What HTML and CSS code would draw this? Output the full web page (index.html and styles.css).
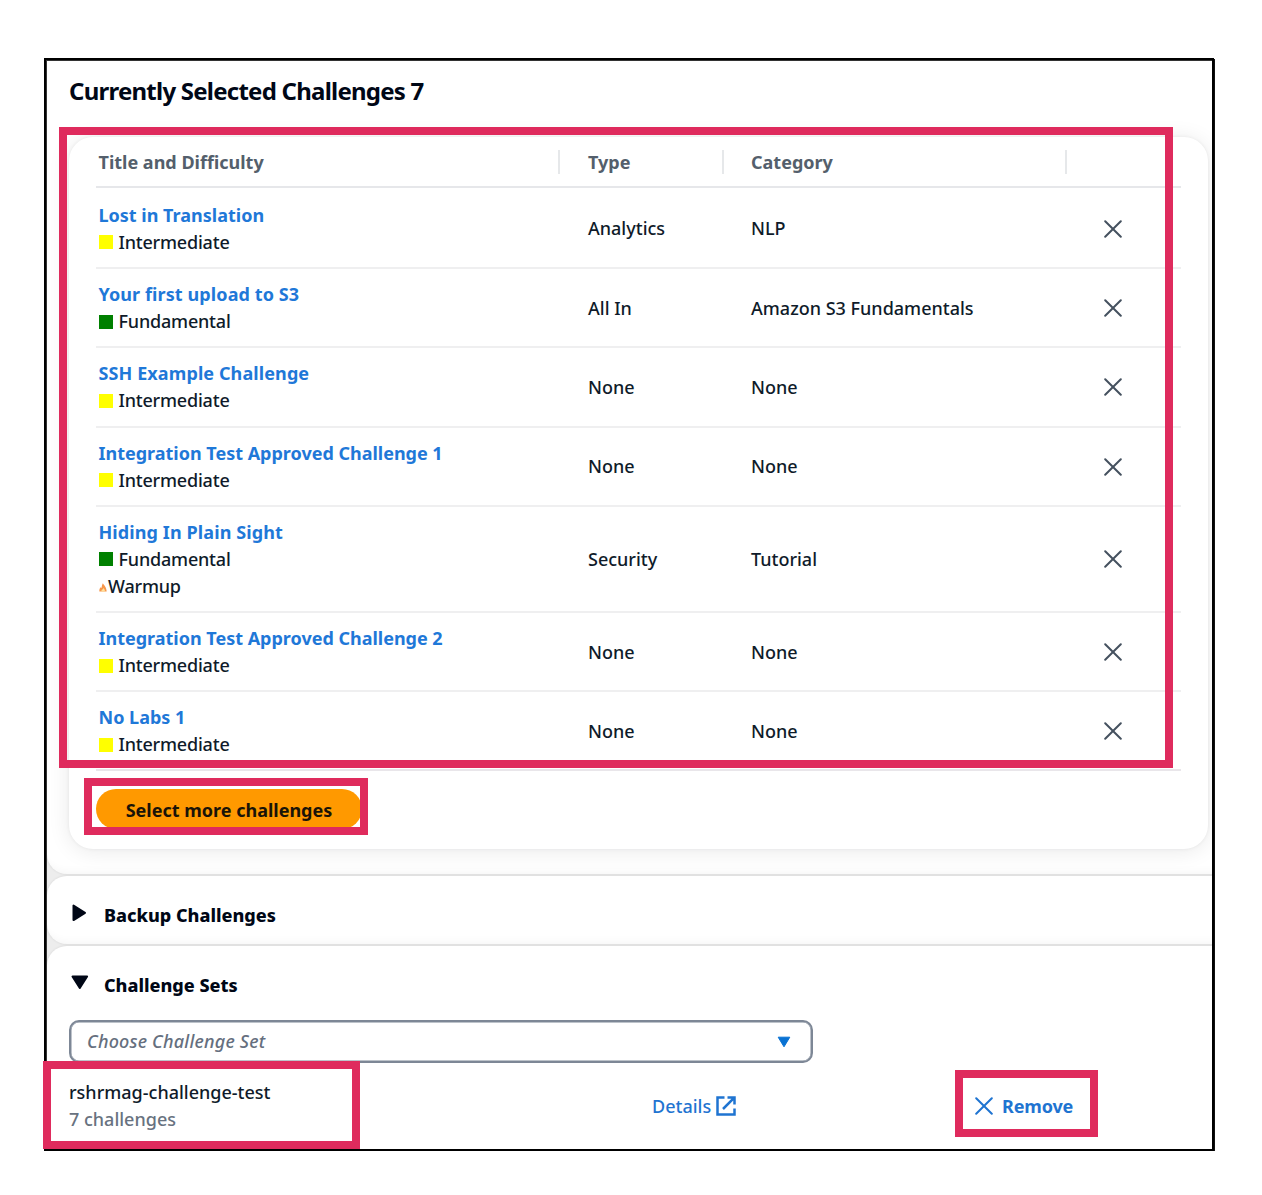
FILE: index.html
```
<!DOCTYPE html>
<html lang="en">
<head>
<meta charset="utf-8">
<title>Challenges</title>
<link rel="stylesheet" href="styles.css">
</head>
<body>
<svg class="defs" width="0" height="0">
  <symbol id="close" viewBox="0 0 18 18"><path d="M1.2 1.2 16.8 16.8M16.8 1.2 1.2 16.8" fill="none" stroke="currentColor" stroke-width="2" stroke-linecap="round"/></symbol>
</svg>
<main class="frame">
  <div class="clip">
    <section class="panel selected">
      <h1>Currently Selected Challenges 7</h1>
      <div class="card">
        <div class="table">
          <div class="row head"><div>Title and Difficulty</div><div>Type</div><div>Category</div><div></div></div>
          <div class="row first"><div><a>Lost in Translation</a><p><i class="sq yellow"></i>Intermediate</p></div><div>Analytics</div><div>NLP</div><div><svg class="x"><use href="#close"/></svg></div></div>
          <div class="row"><div><a>Your first upload to S3</a><p><i class="sq green"></i>Fundamental</p></div><div>All In</div><div>Amazon S3 Fundamentals</div><div><svg class="x"><use href="#close"/></svg></div></div>
          <div class="row"><div><a>SSH Example Challenge</a><p><i class="sq yellow"></i>Intermediate</p></div><div>None</div><div>None</div><div><svg class="x"><use href="#close"/></svg></div></div>
          <div class="row"><div><a class="long">Integration Test Approved Challenge 1</a><p><i class="sq yellow"></i>Intermediate</p></div><div>None</div><div>None</div><div><svg class="x"><use href="#close"/></svg></div></div>
          <div class="row tall"><div><a>Hiding In Plain Sight</a><p><i class="sq green"></i>Fundamental</p><p><svg class="flame" viewBox="0 0 9 10"><path d="M4.300.3C5.500 2.200 8.600 5 8.600 9.500H.4C.2 7 1 5.500 2.200 4.800l.8.8C3 3.500 3.700 1.700 4.300.3z" fill="#f7964a"/><path d="M4.800 5.500c1.200 1 2 2.300 1.900 4H2.600c0-1.200.6-1.700 1.200-2.200.500-.4.900-.9 1-1.800z" fill="#ffe09a"/></svg>Warmup</p></div><div>Security</div><div>Tutorial</div><div><svg class="x"><use href="#close"/></svg></div></div>
          <div class="row"><div><a class="long">Integration Test Approved Challenge 2</a><p><i class="sq yellow"></i>Intermediate</p></div><div>None</div><div>None</div><div><svg class="x"><use href="#close"/></svg></div></div>
          <div class="row"><div><a>No Labs 1</a><p><i class="sq yellow"></i>Intermediate</p></div><div>None</div><div>None</div><div><svg class="x"><use href="#close"/></svg></div></div>
        </div>
        <button class="primary">Select more challenges</button>
      </div>
    </section>
    <section class="panel backup">
      <svg class="tri" viewBox="0 0 18 18"><path d="M2.500 1.500v14.600L14 8.800z" fill="#000716" stroke="#000716" stroke-width="2" stroke-linejoin="round"/></svg>
      <h2>Backup Challenges</h2>
    </section>
    <section class="panel sets">
      <div class="sets-head">
        <svg class="tri" viewBox="0 0 18 18"><path d="M1.500 2.500h14.600L8.800 14z" fill="#000716" stroke="#000716" stroke-width="2" stroke-linejoin="round"/></svg>
        <h2>Challenge Sets</h2>
      </div>
      <div class="select"><span>Choose Challenge Set</span><svg width="14" height="12" viewBox="0 0 14 12"><path d="M1.200 1.200h11.600L7 10.800z" fill="#0972d3" stroke="#0972d3" stroke-linejoin="round"/></svg></div>
      <div class="set">
        <div class="set-name"><p>rshrmag-challenge-test</p><p class="muted">7 challenges</p></div>
        <a class="details">Details<svg width="20" height="20" viewBox="0 0 20 20" fill="none" stroke="currentColor" stroke-width="2.500"><path d="M8.500 1.500h-7v17h17v-6M11.500 1.500h7v7M18.300 1.700 7 13"/></svg></a>
        <a class="remove"><svg class="x"><use href="#close"/></svg>Remove</a>
      </div>
    </section>
  </div>
  <div class="mark mark-table"></div>
  <div class="mark mark-button"></div>
  <div class="mark mark-set"></div>
  <div class="mark mark-remove"></div>
</main>
</body>
</html>
```
FILE: styles.css
```
* { box-sizing: border-box; }
body {
  margin: 0;
  background: #fff;
  color: #0f1b2a;
  font: 500 18px/27px "Noto Sans", "Open Sans", sans-serif;
}
h1, h2, p { margin: 0; }
.defs { display: block; }
.frame {
  position: relative;
  width: 1170px;
  height: 1093px;
  margin: 58px 0 0 44px;
  padding: 1px 0 0 1px;
  border: 2px solid #000;
  box-shadow: 1px 1px 0 #111, inset 1px 1px 0 #333;
}
.clip { height: 100%; overflow: hidden; background: #ededed; }

.panel {
  width: 1190px;
  background: #fff;
  border-radius: 20px;
  box-shadow: 0 0 2px 1px rgba(0, 7, 22, .05), inset 0 -10px 8px -8px rgba(0, 7, 22, .04);
}
.selected {
  height: 813px;
  padding: 14px 0 0 22px;
  border-radius: 0 0 20px 20px;
  overflow: hidden;
}
h1 {
  font-size: 24px;
  font-weight: 700;
  line-height: 32px;
  letter-spacing: -.76px;
  color: #000716;
}
.card {
  width: 1139px;
  height: 712px;
  margin-top: 30px;
  padding-left: 27px;
  border-radius: 24px;
  background: #fff;
  box-shadow: 0 0 3px 1px rgba(0, 7, 22, .04), 0 2px 22px rgba(0, 7, 22, .09);
}
.table { width: 1085px; }
.row {
  display: grid;
  grid-template-columns: 464px 164px 343px 114px;
  align-items: center;
  height: 79.3px;
  border-bottom: 2px solid #efeff0;
}
.row > div { padding-left: 28px; }
.row > div:nth-child(3) { padding-left: 27px; }
.row > div:first-child { padding-left: 2.500px; }
.row > div:last-child { padding-left: 37px; display: flex; }
.row:not(.head) { padding-top: 1px; }
.head {
  height: 51px;
  font-weight: 700;
  color: #545f6c;
  border-bottom-color: #e6e7ea;
}
.head > div:not(:last-child) { border-right: 2px solid #e6e8ea; height: 24px; line-height: 24px; }
.first { height: 81px; }
.row.first { padding-top: 2px; }
.tall { height: 106px; }
.row:last-child { border-bottom-color: #e9e6ea; }
.row a {
  display: block;
  font-weight: 700;
  letter-spacing: .1px;
  color: #1f78d8;
}
.first a, .row:last-child a { letter-spacing: 0; }
.row a.long { letter-spacing: -.01px; }
.row p { display: flex; align-items: center; letter-spacing: -.2px; }
.sq { width: 14px; height: 14px; margin-right: 6px; }
.yellow { background: #ff0; }
.green { background: #008000; }
.flame { width: 8px; height: 9px; margin: 2px 1.500px 0 0; }
.x { width: 18px; height: 18px; color: #45515f; }
.primary {
  display: block;
  width: 266px;
  height: 40px;
  margin-top: 18px;
  padding: 0;
  border: 0;
  border-radius: 20px;
  background: #f90;
  color: #1a1408;
  font: 700 18px/42px "Noto Sans", sans-serif;
}
h2 {
  font-size: 18px;
  font-weight: 800;
  line-height: 27px;
  color: #000716;
}
.tri { width: 18px; height: 18px; }
.backup {
  display: flex;
  align-items: center;
  gap: 15px;
  height: 68px;
  margin-top: 2px;
  padding: 11px 0 0 24px;
}
.backup .tri, .sets-head .tri { margin-bottom: 5px; }
.sets { height: 240px; margin-top: 2px; padding: 26px 0 0 22px; }
.sets-head { display: flex; align-items: center; gap: 15px; padding-left: 2px; }
.select {
  display: flex;
  align-items: center;
  justify-content: space-between;
  width: 744px;
  height: 43px;
  margin-top: 21px;
  padding: 0 20px 0 16px;
  border: 2px solid #7d8796;
  box-shadow: inset 0 0 0 .5px #7d8796;
  border-radius: 10px;
  color: #656f7e;
  font-style: italic;
  font-weight: 500;
  letter-spacing: .2px;
}
.set {
  display: grid;
  grid-template-columns: 583px 323px auto;
  align-items: center;
  margin-top: 16px;
}
.muted { color: #687280; }
.details, .remove { display: flex; align-items: center; color: #1f74d1; }
.details { gap: 5px; }
.remove { gap: 9px; font-weight: 700; letter-spacing: -.15px; }
.remove .x { color: #1f74d1; }

/* callout outlines laid over the page */
.mark { position: absolute; border: 8px solid #df2b5d; }
.mark-table { left: 13px; top: 67px; width: 1114px; height: 641px; }
.mark-button { left: 38px; top: 718px; width: 284px; height: 57px; }
.mark-set { left: -3px; top: 1001px; width: 317px; height: 88px; }
.mark-remove { left: 909px; top: 1010px; width: 143px; height: 67px; }
```
